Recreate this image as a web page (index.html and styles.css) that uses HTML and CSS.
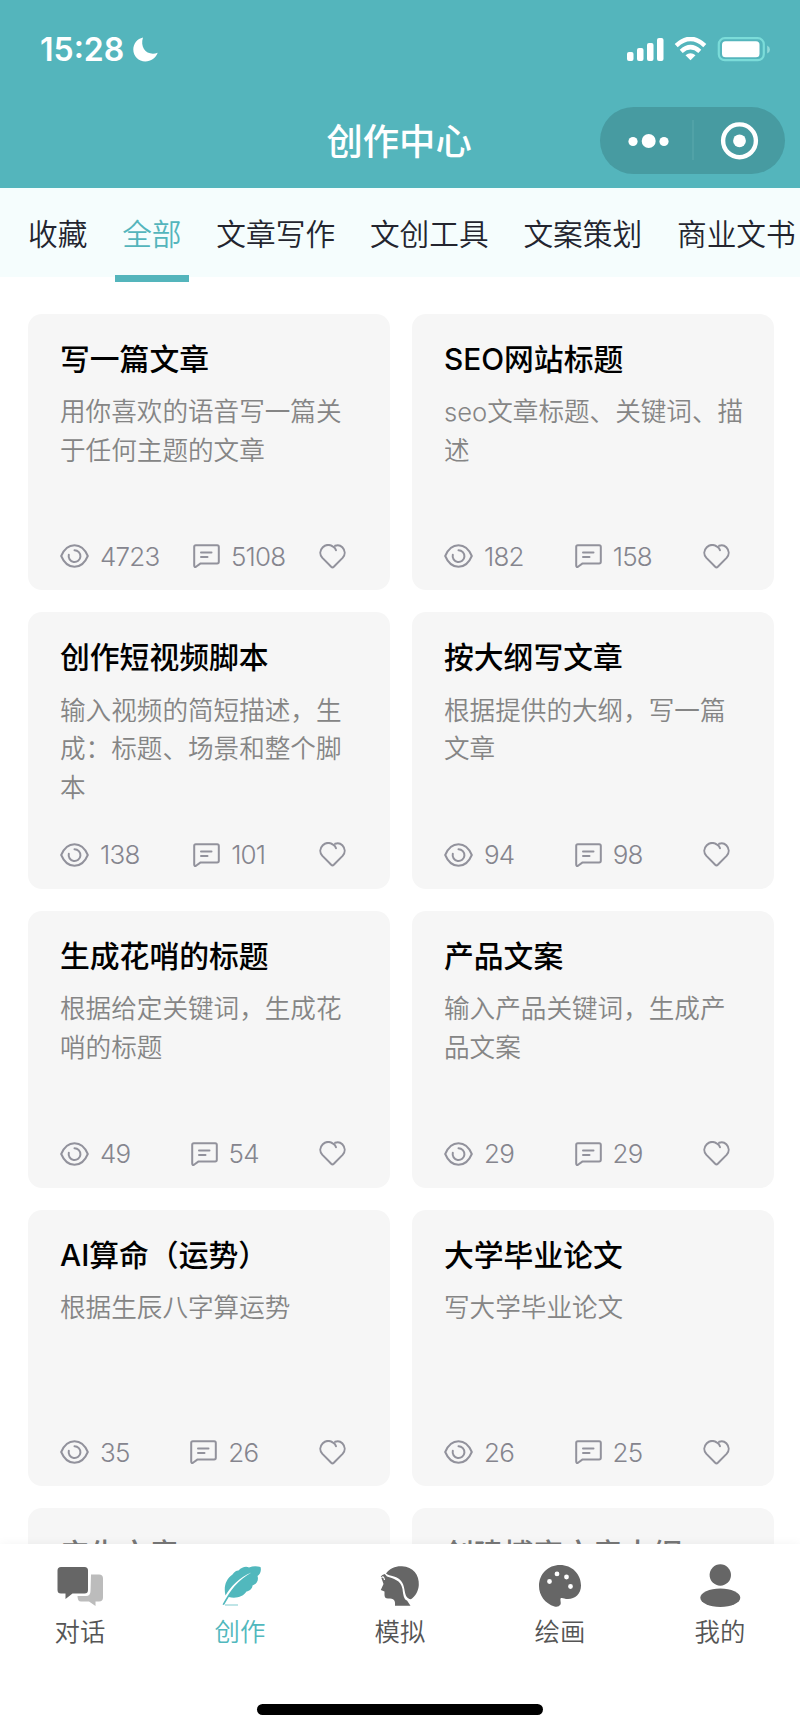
FILE: index.html
```html
<!DOCTYPE html>
<html lang="zh-CN">
<head>
<meta charset="utf-8">
<title>创作中心</title>
<link rel="stylesheet" href="styles.css">
</head>
<body>
<svg class="sprite" aria-hidden="true">
  <symbol id="eye" viewBox="0 0 29 24"><path d="M1.200 12C4.200 4.800 9 1.200 14.500 1.200S24.800 4.800 27.800 12C24.800 19.200 20 22.800 14.500 22.800S4.200 19.200 1.200 12Z"/><path d="M14.500 6.200A5.900 5.900 0 1 1 8.800 10.700"/></symbol>
  <symbol id="comment" viewBox="0 0 27 24"><path d="M2.800 1.200H24.200Q25.800 1.200 25.800 2.800V17.800Q25.800 19.400 24.200 19.400H7.600L3 22.700Q1.200 23.400 1.200 21.600V2.800Q1.200 1.200 2.800 1.200Z"/><path d="M8 8.400H18.500M8 13H14.500"/></symbol>
  <symbol id="heart" viewBox="0 0 27 25"><path d="M17 6.200C16.600 4.600 15.600 3.400 14 2.600C10.800.500 7 .300 3.800 3.200C.500 6.500.600 10.800 3.400 13.900L12.200 22.800Q13.500 24 14.800 22.800L23.600 13.900C26.400 10.800 26.400 6.500 23.300 3.300C21.300 1.300 18.500.900 16.200 1.800"/></symbol>
</svg>
<div class="app">
  <header class="header">
    <div class="status">
      <div class="clock"><span>15:28</span>
        <svg class="moon" viewBox="0 0 25 25"><path d="M10 .5C4.200 1.800.3 6.800.3 12.500C.3 19.200 5.600 24.500 12.300 24.500C18 24.500 23 21 24.700 15.800C14.500 19.500 6.500 11 10 .5Z" fill="#fff"/></svg>
      </div>
      <svg class="indicators" viewBox="0 0 144 26">
        <g fill="#fff"><rect x="0" y="15" width="6.500" height="9" rx="2"/><rect x="10" y="11" width="6.500" height="13" rx="2"/><rect x="20" y="6" width="6.500" height="18" rx="2"/><rect x="30" y="1" width="6.500" height="23" rx="2"/>
        <path d="M58.500 18.200L63.500 23.200L68.500 18.200Q63.500 14.500 58.500 18.200Z"/></g>
        <path d="M49.200 8.600Q63.500-4.800 77.800 8.600M54.200 14.300Q63.500 6 72.800 14.300" fill="none" stroke="#fff" stroke-width="4.400"/>
        <rect x="91.800" y="1.200" width="45" height="22" rx="6" fill="none" stroke="#7bdcd9" stroke-width="2.200"/>
        <rect x="95" y="4.300" width="37.500" height="16" rx="3.500" fill="#fff"/><path d="M140.200 8.500Q143 10 143 12.500T140.200 16.500Z" fill="#91dad9"/>
      </svg>
    </div>
    <div class="navbar">
      <h1>创作中心</h1>
      <div class="capsule">
        <svg viewBox="0 0 185 67"><g fill="#fff"><circle cx="33" cy="34.500" r="4.600"/><circle cx="48.700" cy="34" r="7"/><circle cx="64" cy="34.500" r="4.600"/><circle cx="139.500" cy="33.800" r="6.400"/></g><circle cx="139.500" cy="33.800" r="16.400" fill="none" stroke="#fff" stroke-width="4.400"/><path d="M93 13V53" stroke="#55a5aa" stroke-width="1.500"/></svg>
      </div>
    </div>
  </header>
  <nav class="tabs"><span>收藏</span><span class="active">全部</span><span>文章写作</span><span>文创工具</span><span>文案策划</span><span>商业文书</span></nav>
  <main class="cards">
    <article class="card"><h2>写一篇文章</h2><p>用你喜欢的语音写一篇关于任何主题的文章</p><footer><span><svg class="eye"><use href="#eye"/></svg>4723</span><span><svg class="comment"><use href="#comment"/></svg>5108</span><svg class="heart"><use href="#heart"/></svg></footer></article>
    <article class="card"><h2>SEO网站标题</h2><p>seo文章标题、关键词、描述</p><footer><span><svg class="eye"><use href="#eye"/></svg>182</span><span><svg class="comment"><use href="#comment"/></svg>158</span><svg class="heart"><use href="#heart"/></svg></footer></article>
    <article class="card"><h2>创作短视频脚本</h2><p>输入视频的简短描述，生成：标题、场景和整个脚本</p><footer><span><svg class="eye"><use href="#eye"/></svg>138</span><span><svg class="comment"><use href="#comment"/></svg>101</span><svg class="heart"><use href="#heart"/></svg></footer></article>
    <article class="card"><h2>按大纲写文章</h2><p>根据提供的大纲，写一篇文章</p><footer><span><svg class="eye"><use href="#eye"/></svg>94</span><span><svg class="comment"><use href="#comment"/></svg>98</span><svg class="heart"><use href="#heart"/></svg></footer></article>
    <article class="card"><h2>生成花哨的标题</h2><p>根据给定关键词，生成花哨的标题</p><footer><span><svg class="eye"><use href="#eye"/></svg>49</span><span><svg class="comment"><use href="#comment"/></svg>54</span><svg class="heart"><use href="#heart"/></svg></footer></article>
    <article class="card"><h2>产品文案</h2><p>输入产品关键词，生成产品文案</p><footer><span><svg class="eye"><use href="#eye"/></svg>29</span><span><svg class="comment"><use href="#comment"/></svg>29</span><svg class="heart"><use href="#heart"/></svg></footer></article>
    <article class="card"><h2>AI算命（运势）</h2><p>根据生辰八字算运势</p><footer><span><svg class="eye"><use href="#eye"/></svg>35</span><span><svg class="comment"><use href="#comment"/></svg>26</span><svg class="heart"><use href="#heart"/></svg></footer></article>
    <article class="card"><h2>大学毕业论文</h2><p>写大学毕业论文</p><footer><span><svg class="eye"><use href="#eye"/></svg>26</span><span><svg class="comment"><use href="#comment"/></svg>25</span><svg class="heart"><use href="#heart"/></svg></footer></article>
    <article class="card faded"><h2>产生文章</h2></article>
    <article class="card faded"><h2>创建博客文章大纲</h2></article>
  </main>
  <nav class="bottom">
    <div class="items">
      <div class="item"><svg viewBox="0 0 48 48"><path d="M35 12.500H43Q47 12.500 47 16.500V35.500Q47 39.500 43 39.500H39.500V44L33 39.500H25Q21.500 39.500 21.500 34H30Q34.500 34 34.500 29Z" fill="#bcbcbc"/><path d="M5 5H28.500Q32 5 32 8.500V28Q32 31.500 28.500 31.500H16.500L9.500 37V31.500H5Q1.500 31.500 1.500 28V8.500Q1.500 5 5 5Z" fill="#666"/></svg>对话</div>
      <div class="item current"><svg viewBox="0 0 48 48"><path d="M6.500 42.500C14 28.500 22 18 35.500 10.500C23 15.500 14.500 25 9.500 33.500C7.500 25 9.500 17.500 16.500 12.500C18.500 10 20 8.500 22.500 8.500C26 5 30 4 33 5.500C37 3.800 41 4 44.500 5C45.500 8 44.500 12 41.500 14C43 18 40.500 22 36.500 23.500C36.500 26.500 33.500 29 30.500 29.500C27.500 34.500 20 37 12.800 35L8 43Z" fill="#51b8bd"/><path d="M9 43H22" stroke="#9dd7da" stroke-width="1.300"/></svg>创作</div>
      <div class="item"><svg viewBox="0 0 48 48"><path d="M10 11.500C14 6 20 3.800 26 4.200C37 4.800 43.500 13 42.800 23C42.500 29 39.500 34 35 37.300C30.500 36.500 29.500 33.500 28.500 28C27.500 20 24 16.500 18 14.500C14 13.500 12 13 10 11.500Z" fill="#666"/><path d="M6.500 19L4.800 14.500Q6 12.500 8.800 12L11 14.500C17 16.500 25 18 26.500 27C27.200 33 28 37.500 31 38.500L34.500 43.800H19C19.500 38 18 36.500 12 36.500Q8.500 36.500 8.500 33V29.500L4.800 28L7.500 22Z" fill="#666"/><path d="M5.500 16Q7.500 13 8.500 18" fill="none" stroke="#fff" stroke-width="1.200"/></svg>模拟</div>
      <div class="item"><svg viewBox="0 0 48 48"><path fill="#666" fill-rule="evenodd" d="M24 3C36 3 45 12 45 23.500C45 32 39 37 32 37C28.500 37 27 35.500 25 36C23.500 37 25.500 41 24.500 42.500Q22.500 45.500 18.500 44.500C9 41.500 3 33.500 3 24C3 12 12 3 24 3ZM21 9.500A2.400 2.400 0 1 0 21 14.300A2.400 2.400 0 1 0 21 9.500ZM30.500 12.600A2.400 2.400 0 1 0 30.500 17.400A2.400 2.400 0 1 0 30.500 12.600ZM13.500 17.100A2.400 2.400 0 1 0 13.500 21.900A2.400 2.400 0 1 0 13.500 17.100ZM34.500 22.100A2.400 2.400 0 1 0 34.500 26.900A2.400 2.400 0 1 0 34.500 22.100Z"/></svg>绘画</div>
      <div class="item"><svg viewBox="0 0 48 48"><g fill="#666"><circle cx="24.300" cy="13" r="10.700"/><ellipse cx="24.300" cy="35.700" rx="20" ry="9.200"/></g></svg>我的</div>
    </div>
    <div class="home"></div>
  </nav>
</div>
</body>
</html>
```
FILE: styles.css
```css
* { box-sizing: border-box; }
body {
  margin: 0;
  background: #fff;
  font-family: "Inter", "Noto Sans CJK SC", sans-serif;
}
h1, h2, p { margin: 0; }
.sprite { position: absolute; width: 0; height: 0; }
.app {
  width: 800px;
  height: 1732px;
  display: flex;
  flex-direction: column;
  overflow: hidden;
}
.header { flex: none; height: 188px; background: #54b5bc; color: #fff; }
.status {
  height: 107px;
  padding: 30px 31px 0 40px;
  display: flex;
  justify-content: space-between;
  align-items: flex-start;
}
.clock {
  display: flex;
  align-items: center;
  gap: 9px;
  height: 38px;
  font-size: 32px;
  font-weight: 600;
}
.moon { width: 25px; height: 25px; }
.indicators { width: 144px; height: 26px; margin-top: 7px; margin-right: -2px; }
.navbar {
  height: 67px;
  padding: 0 15px 0 326.500px;
  display: flex;
  justify-content: space-between;
  align-items: center;
}
h1 { font-size: 36.300px; font-weight: 500; line-height: 54px; padding-top: 2px; }
.capsule { width: 185px; height: 67px; border-radius: 34px; background: #479ba1; }
.capsule svg { display: block; width: 185px; height: 67px; }
.tabs {
  flex: none;
  height: 94px;
  display: flex;
  padding-left: 28px;
  gap: 34.800px;
  background: linear-gradient(#f5fdfd 89px, #fff 89px);
  color: #23252f;
  font-size: 29.700px;
  font-weight: 350;
  line-height: 93px;
  white-space: nowrap;
}
.tabs .active { color: #54b5bc; position: relative; }
.tabs .active::after {
  content: "";
  position: absolute;
  left: -7px;
  right: -7px;
  bottom: 0;
  height: 7px;
  background: #54b5bc;
}
.cards {
  flex: 1;
  min-height: 0;
  overflow: hidden;
  padding: 31.700px 26px 0 28px;
  display: grid;
  grid-template-columns: 1fr 1fr;
  grid-auto-rows: 276.650px;
  gap: 22px;
}
.card {
  display: flex;
  flex-direction: column;
  padding: 23px 30px 18px 32px;
  border-radius: 14px;
  background: #f6f6f6;
}
h2 { font-size: 29.800px; line-height: 44px; font-weight: 500; color: #000; white-space: nowrap; }
.faded h2 { color: #777; padding-top: 1px; }
.card p { margin-top: 12.500px; font-size: 25.600px; line-height: 38.400px; font-weight: 350; color: #858585; }
.card footer {
  margin-top: auto;
  width: 286px;
  height: 32px;
  display: flex;
  justify-content: space-between;
  align-items: center;
  color: #85858e;
  font-size: 26px;
  font-weight: 300;
  letter-spacing: -0.800px;
}
.card footer span { display: flex; align-items: center; gap: 11px; }
.card footer svg { fill: none; stroke: #92929c; stroke-width: 2; stroke-linecap: round; stroke-linejoin: round; }
.eye { width: 29px; height: 24px; }
.comment { width: 27px; height: 24px; }
.heart { width: 27px; height: 25px; }
.bottom {
  flex: none;
  height: 188px;
  position: relative;
  display: flex;
  flex-direction: column;
  justify-content: space-between;
  align-items: center;
  padding: 18px 0 17px;
  background: #fff;
  box-shadow: 0 0 10px rgba(0, 0, 0, 0.050);
}
.items { width: 100%; display: grid; grid-template-columns: repeat(5, 1fr); }
.item {
  display: flex;
  flex-direction: column;
  align-items: center;
  color: #555;
  font-size: 25.400px;
  font-weight: 350;
  line-height: 38px;
}
.item svg { width: 48px; height: 48px; margin-bottom: 3px; }
.item.current { color: #51b8bd; }
.home { width: 286px; height: 11px; border-radius: 6px; background: #000; }
```
